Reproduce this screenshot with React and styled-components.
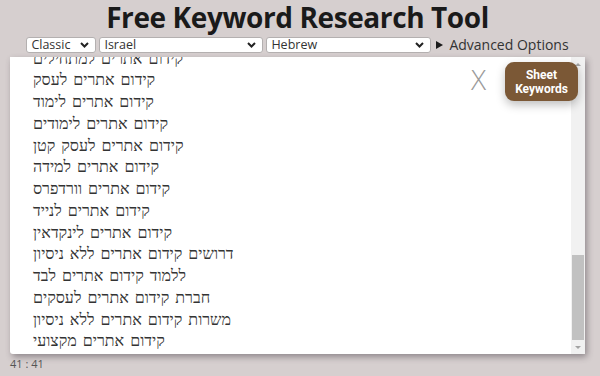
import React from "react";
import styled, { createGlobalStyle } from "styled-components";

const GlobalStyle = createGlobalStyle`
  html, body {
    margin: 0;
    padding: 0;
    background: #d6cfcf;
  }
  body {
    font-family: "Open Sans", "Liberation Sans", sans-serif;
    color: #222;
  }
`;

const Page = styled.div`
  width: 595px;
  display: flex;
  flex-direction: column;
  align-items: center;
`;

const Title = styled.h1`
  margin: 0;
  height: 36px;
  font-size: 28px;
  line-height: 35px;
  font-weight: 700;
  color: #1a1a1a;
  letter-spacing: -0.4px;
`;

const Controls = styled.div`
  display: flex;
  align-items: center;
  gap: 3px;
  height: 17px;
`;

const Select = styled.div`
  width: ${(p) => p.$w}px;
  height: 16px;
  box-sizing: border-box;
  display: flex;
  align-items: center;
  justify-content: space-between;
  padding: 0 6px 0 4px;
  background: #fff;
  border: 1px solid #b4b0b0;
  border-radius: 3px;
  font-size: 12.5px;
  line-height: 14px;
  color: #333;
`;

const Chevron = () => (
  <svg width="9" height="6" viewBox="0 0 9 6">
    <path d="M1 1l3.5 3.5L8 1" fill="none" stroke="#222" strokeWidth="2" />
  </svg>
);

const Advanced = styled.div`
  display: flex;
  align-items: center;
  gap: 6px;
  margin-left: 2px;
  font-size: 14px;
  line-height: 17px;
  color: #333;
`;

const Triangle = styled.span`
  width: 0;
  height: 0;
  border-left: 7px solid #1a1a1a;
  border-top: 4.5px solid transparent;
  border-bottom: 4.5px solid transparent;
`;

const Panel = styled.div`
  position: relative;
  align-self: stretch;
  margin: 4px 10px 0;
  height: 297px;
  display: flex;
  background: #fff;
  border-radius: 0 0 3px 3px;
  box-shadow: 2px 3px 6px rgba(60, 50, 60, 0.45);
`;

const Lines = styled.div`
  flex: 1;
  display: flex;
  flex-direction: column;
  justify-content: flex-end;
  overflow: hidden;
  padding: 0 0 2px 23px;
  font-family: "Liberation Serif", "DejaVu Serif", serif;
  font-size: 16px;
  line-height: 21.75px;
  color: #333;
  word-spacing: 2px;
`;

const Line = styled.div`
  white-space: nowrap;
`;

const Track = styled.div`
  width: 14px;
  display: flex;
  flex-direction: column;
  background: #f1f1f1;
`;

const Arrow = styled.div`
  height: 14px;
  display: flex;
  align-items: center;
  justify-content: center;
  &::after {
    content: "";
    border-left: 3px solid transparent;
    border-right: 3px solid transparent;
    ${(p) => (p.$up ? "border-bottom" : "border-top")}: 3px solid #a3a3a3;
  }
`;

const TrackSpace = styled.div`
  flex: 1;
`;

const Thumb = styled.div`
  height: 85px;
  margin: 0 1px;
  background: #c1c1c1;
`;

const Close = styled.div`
  position: absolute;
  top: 8px;
  right: 99px;
  font-size: 28px;
  font-weight: 300;
  line-height: 28px;
  color: #9a9a9a;
`;

const SheetButton = styled.button`
  position: absolute;
  top: 5px;
  right: 7px;
  width: 73px;
  height: 39px;
  border: none;
  border-radius: 9px;
  background: #7b5836;
  color: #fff;
  font-family: Roboto, "Open Sans", sans-serif;
  font-size: 12px;
  font-weight: 700;
  line-height: 14px;
  box-shadow: 0 4px 10px rgba(0, 0, 0, 0.25);
`;

const Counter = styled.div`
  align-self: flex-start;
  margin: 2px 0 0 10px;
  font-size: 11px;
  color: #555;
`;

const keywords = [
  "קידום אתרים למתחילים",
  "קידום אתרים לעסק",
  "קידום אתרים לימוד",
  "קידום אתרים לימודים",
  "קידום אתרים לעסק קטן",
  "קידום אתרים למידה",
  "קידום אתרים וורדפרס",
  "קידום אתרים לנייד",
  "קידום אתרים לינקדאין",
  "דרושים קידום אתרים ללא ניסיון",
  "ללמוד קידום אתרים לבד",
  "חברת קידום אתרים לעסקים",
  "משרות קידום אתרים ללא ניסיון",
  "קידום אתרים מקצועי",
];

export default function App() {
  return (
    <Page>
      <GlobalStyle />
      <Title>Free Keyword Research Tool</Title>
      <Controls>
        <Select $w={70}>
          Classic <Chevron />
        </Select>
        <Select $w={164}>
          Israel <Chevron />
        </Select>
        <Select $w={165}>
          Hebrew <Chevron />
        </Select>
        <Advanced>
          <Triangle />
          Advanced Options
        </Advanced>
      </Controls>
      <Panel>
        <Lines>
          {keywords.map((k) => (
            <Line key={k}>{k}</Line>
          ))}
        </Lines>
        <Track>
          <Arrow $up />
          <TrackSpace />
          <Thumb />
          <Arrow />
        </Track>
        <Close>X</Close>
        <SheetButton>
          Sheet
          <br />
          Keywords
        </SheetButton>
      </Panel>
      <Counter>41 : 41</Counter>
    </Page>
  );
}
